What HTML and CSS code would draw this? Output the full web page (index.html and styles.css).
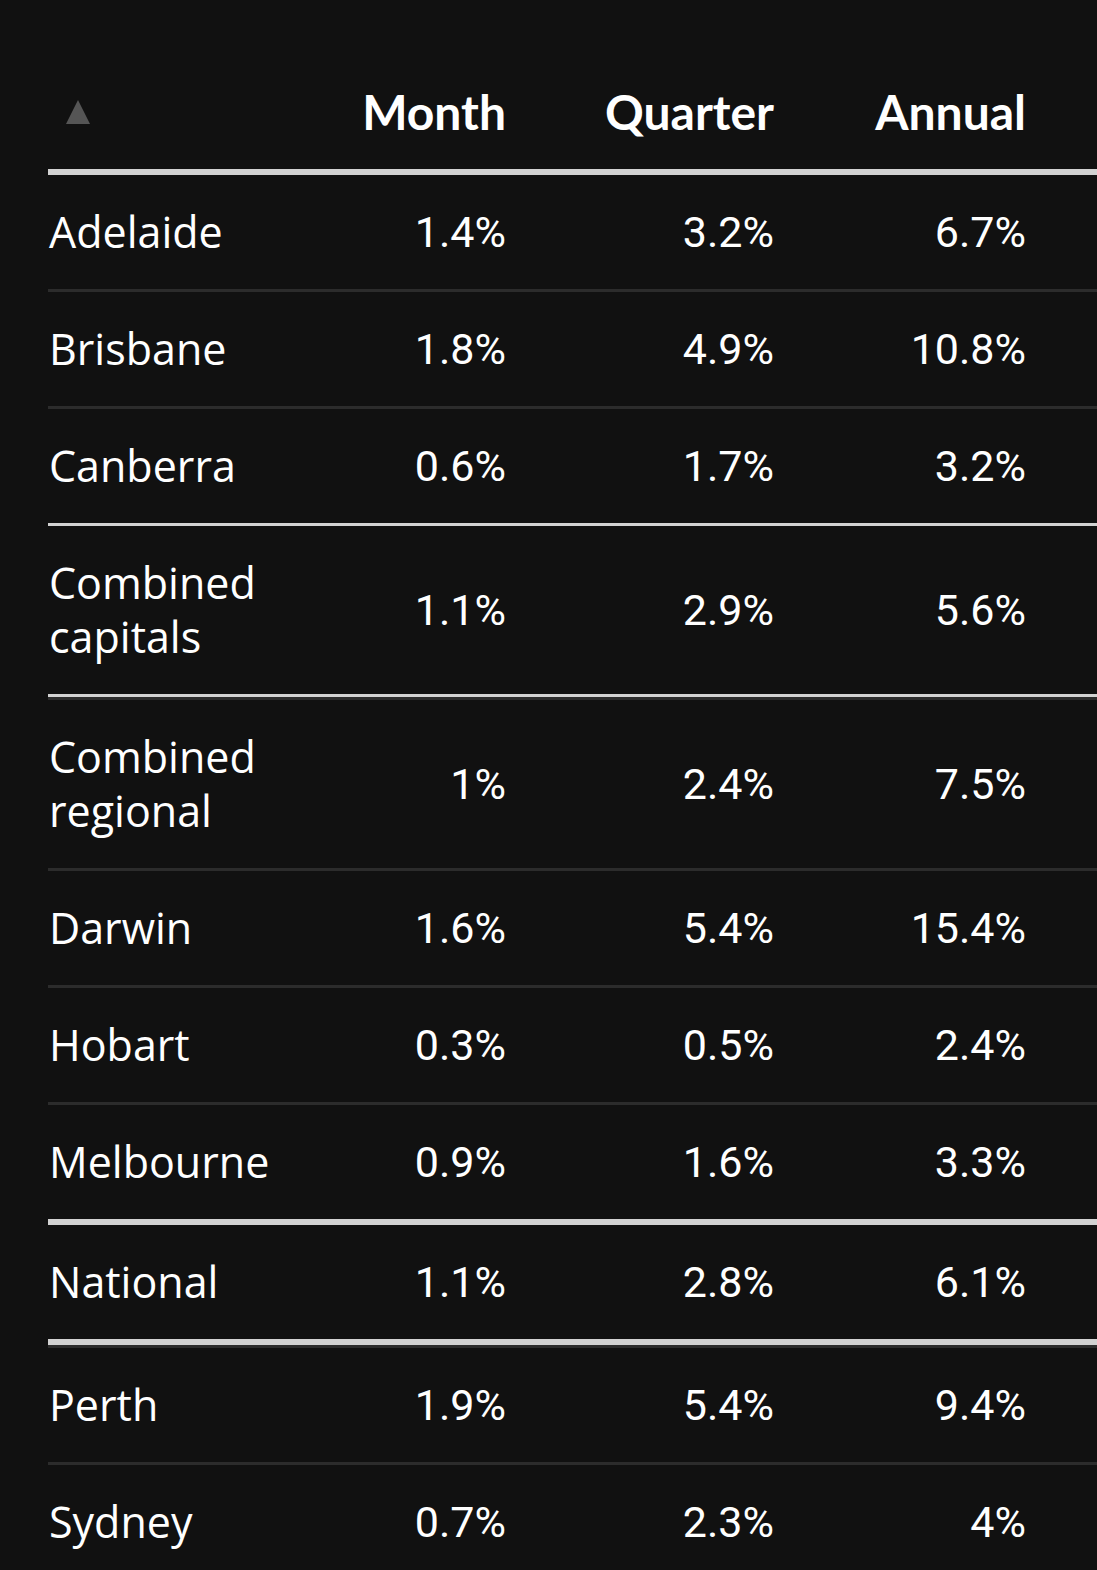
FILE: index.html
```html
<!DOCTYPE html>
<html lang="en">
<head>
<meta charset="utf-8">
<title>House price changes</title>
<link rel="stylesheet" href="styles.css">
</head>
<body>
<div class="wrap">
<table class="data">
  <colgroup>
    <col class="c-name">
    <col class="c-month">
    <col class="c-quarter">
    <col class="c-annual">
    <col class="c-rest">
  </colgroup>
  <thead>
    <tr>
      <th class="name"><svg class="sort" width="24" height="24" viewBox="0 0 24 24"><polygon points="12,0 24,24 0,24" fill="#555555"/></svg></th>
      <th class="num">Month</th>
      <th class="num">Quarter</th>
      <th class="num">Annual</th>
      <th class="rest"></th>
    </tr>
  </thead>
  <tbody>
    <tr><td class="name">Adelaide</td><td class="num">1.4%</td><td class="num">3.2%</td><td class="num">6.7%</td><td class="rest"></td></tr>
    <tr><td class="name">Brisbane</td><td class="num">1.8%</td><td class="num">4.9%</td><td class="num">10.8%</td><td class="rest"></td></tr>
    <tr class="pre-hl"><td class="name">Canberra</td><td class="num">0.6%</td><td class="num">1.7%</td><td class="num">3.2%</td><td class="rest"></td></tr>
    <tr class="hl"><td class="name">Combined capitals</td><td class="num">1.1%</td><td class="num">2.9%</td><td class="num">5.6%</td><td class="rest"></td></tr>
    <tr class="after-hl"><td class="name">Combined regional</td><td class="num">1%</td><td class="num">2.4%</td><td class="num">7.5%</td><td class="rest"></td></tr>
    <tr><td class="name">Darwin</td><td class="num">1.6%</td><td class="num">5.4%</td><td class="num">15.4%</td><td class="rest"></td></tr>
    <tr><td class="name">Hobart</td><td class="num">0.3%</td><td class="num">0.5%</td><td class="num">2.4%</td><td class="rest"></td></tr>
    <tr class="pre-strong"><td class="name">Melbourne</td><td class="num">0.9%</td><td class="num">1.6%</td><td class="num">3.3%</td><td class="rest"></td></tr>
    <tr class="strong"><td class="name">National</td><td class="num">1.1%</td><td class="num">2.8%</td><td class="num">6.1%</td><td class="rest"></td></tr>
    <tr class="after-hl"><td class="name">Perth</td><td class="num">1.9%</td><td class="num">5.4%</td><td class="num">9.4%</td><td class="rest"></td></tr>
    <tr class="last"><td class="name">Sydney</td><td class="num">0.7%</td><td class="num">2.3%</td><td class="num">4%</td><td class="rest"></td></tr>
  </tbody>
</table>
</div>
</body>
</html>
```

FILE: styles.css
```css
html, body {
  margin: 0;
  padding: 0;
  background: #111111;
}

body {
  color: #ffffff;
  font-family: "Open Sans", "DejaVu Sans", sans-serif;
  overflow: hidden;
}

.wrap {
  padding: 55px 0 0 48px;
}

.data {
  width: 100%;
  table-layout: fixed;
  border-collapse: separate;
  border-spacing: 0;
}

.c-name { width: 256px; }
.c-month { width: 216px; }
.c-quarter { width: 268px; }
.c-annual { width: 252px; }

.data th {
  font-family: "Lato", "Open Sans", sans-serif;
  font-weight: 700;
  font-size: 48px;
  line-height: 54px;
  padding: 30px 14px 30px 0;
  border-bottom: 6px solid #d2d2d2;
  vertical-align: middle;
}

.data th.name {
  text-align: left;
  padding-left: 18px;
}

.data th.num {
  text-align: right;
}

.sort {
  display: block;
}

.data td {
  font-size: 43px;
  line-height: 54px;
  font-weight: 400;
  padding: 30px 14px 30px 0;
  border-bottom: 3px solid #2c2c2c;
  vertical-align: middle;
}

.data td.name {
  text-align: left;
  padding-left: 1px;
}

.data td.num {
  text-align: right;
  font-family: "Roboto", "Open Sans", sans-serif;
  font-weight: 400;
}

.data .rest {
  padding: 0;
}

.pre-hl td,
.hl td {
  border-bottom: 3px solid #d2d2d2;
}

.after-hl td {
  border-top: 3px solid #2c2c2c;
}

.pre-strong td,
.strong td {
  border-bottom: 6px solid #d2d2d2;
}

.last td {
  border-bottom: none;
}
```
